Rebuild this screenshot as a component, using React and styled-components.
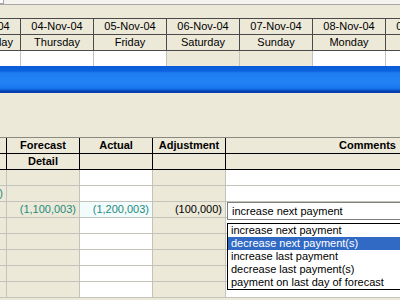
import styled, { createGlobalStyle } from "styled-components";

const GlobalStyle = createGlobalStyle`
  html, body {
    margin: 0;
    padding: 0;
    background: #ece9d8;
    overflow: hidden;
    font-family: "Liberation Sans", Arial, sans-serif;
  }
`;

const Page = styled.div`
  width: 400px;
  height: 300px;
  overflow: hidden;
  background: #ece9d8;
`;

const TopStrip = styled.div`
  height: 4px;
  background: #f4f3ee;
  border-bottom: 1px solid #a7a6aa;
  display: flex;
`;

const StripBox = styled.div`
  width: 3px;
  height: 3px;
  border-right: 1px solid #a7a6aa;
  border-bottom: 1px solid #a7a6aa;
  background: #fff;
`;

const TopGap = styled.div`
  height: 13px;
`;

const DayGrid = styled.div`
  display: grid;
  grid-template-columns: repeat(7, 73px);
  margin-left: -52px;
  border-top: 1px solid #4a4a4a;
`;

const HeadCell = styled.div`
  height: 15px;
  line-height: 15px;
  box-sizing: content-box;
  border-right: 1px solid #4a4a4a;
  border-bottom: 1px solid #4a4a4a;
  background: #ece9d8;
  text-align: center;
  font-size: 11px;
  color: #000;
  white-space: nowrap;
  overflow: hidden;
  width: 72px;
`;

const BlankCell = styled.div`
  height: 15px;
  width: 72px;
  border-right: 1px solid #c4c3bb;
  background: ${(p) => (p.$weekend ? "#ece9d8" : "#ffffff")};
`;

const BlueBand = styled.div`
  height: 27px;
  background: linear-gradient(
    to bottom,
    #0a5bd8 0px,
    #0c62dd 5px,
    #1f7cf2 7px,
    #2383f6 16px,
    #1a76ee 22px,
    #0c5fd6 24px,
    #0a3fae 25px,
    #0a3fae 27px
  );
`;

const MidGap = styled.div`
  height: 44px;
`;

const DetailGrid = styled.div`
  display: grid;
  grid-template-columns: 73px 73px 73px 73px 284px;
  margin-left: -66px;
  border-top: 1px solid #8a8a80;
`;

const ColHead = styled.div`
  height: 15px;
  line-height: 15px;
  border-right: 1px solid #000;
  border-bottom: 1px solid #000;
  background: #ece9d8;
  text-align: center;
  font-size: 11px;
  font-weight: bold;
  color: #000;
  white-space: nowrap;
  overflow: hidden;
`;

const DataCell = styled.div`
  position: relative;
  height: 15px;
  line-height: 15px;
  border-right: 1px solid #c4c3bb;
  border-bottom: 1px solid #c4c3bb;
  background: ${(p) => p.$bg};
  text-align: right;
  padding-right: 3px;
  font-size: 11px;
  color: ${(p) => (p.$money ? "#1e8a7c" : "#000")};
  white-space: nowrap;
`;

const Combo = styled.div`
  position: absolute;
  left: 1px;
  top: 0;
  width: 200px;
  height: 16px;
  line-height: 16px;
  border: 1px solid #7f7f7f;
  border-right: none;
  background: #fff;
  text-align: left;
  padding-left: 4px;
  font-size: 11px;
  color: #000;
  z-index: 2;
`;

const DropList = styled.div`
  position: absolute;
  left: 1px;
  top: 21px;
  width: 200px;
  border: 1px solid #000;
  border-right: none;
  background: #fff;
  z-index: 3;
  text-align: left;
`;

const DropItem = styled.div`
  height: 13px;
  line-height: 13px;
  padding-left: 3px;
  font-size: 11px;
  background: ${(p) => (p.$active ? "#316ac5" : "#fff")};
  color: ${(p) => (p.$active ? "#fff" : "#000")};
`;

const days = [
  { date: "03-Nov-04", name: "Wednesday" },
  { date: "04-Nov-04", name: "Thursday" },
  { date: "05-Nov-04", name: "Friday" },
  { date: "06-Nov-04", name: "Saturday", weekend: true },
  { date: "07-Nov-04", name: "Sunday", weekend: true },
  { date: "08-Nov-04", name: "Monday" },
  { date: "09-Nov-04", name: "Tuesday" },
];

const colBg = ["#ece9d8", "#ece9d8", "#ffffff", "#ece9d8", "#ffffff"];

const options = [
  "increase next payment",
  "decrease next payment(s)",
  "increase last payment",
  "decrease last payment(s)",
  "payment on last day of forecast",
];

const rows = [
  ["", "", "", "", ""],
  ["(1,000,000)", "", "", "", ""],
  ["", "(1,100,003)", "(1,200,003)", "(100,000)", "combo"],
  ["", "", "", "", ""],
  ["", "", "", "", ""],
  ["", "", "", "", ""],
  ["", "", "", "", ""],
  ["", "", "", "", ""],
];

export default function App() {
  return (
    <>
      <GlobalStyle />
      <Page>
        <TopStrip>
          <StripBox />
        </TopStrip>
        <TopGap />
        <DayGrid>
          {days.map((d) => (
            <HeadCell key={d.date}>{d.date}</HeadCell>
          ))}
          {days.map((d) => (
            <HeadCell key={d.name}>{d.name}</HeadCell>
          ))}
          {days.map((d) => (
            <BlankCell key={"b" + d.date} $weekend={d.weekend} />
          ))}
        </DayGrid>
        <BlueBand />
        <MidGap />
        <DetailGrid>
          <ColHead>Balance</ColHead>
          <ColHead>Forecast</ColHead>
          <ColHead>Actual</ColHead>
          <ColHead>Adjustment</ColHead>
          <ColHead>Comments</ColHead>
          <ColHead></ColHead>
          <ColHead>Detail</ColHead>
          <ColHead></ColHead>
          <ColHead></ColHead>
          <ColHead></ColHead>
          {rows.map((row, r) =>
            row.map((val, c) => {
              if (val === "combo") {
                return (
                  <DataCell key={r + "-" + c} $bg={colBg[c]}>
                    <Combo>increase next payment</Combo>
                    <DropList>
                      {options.map((o, i) => (
                        <DropItem key={o} $active={i === 1}>
                          {o}
                        </DropItem>
                      ))}
                    </DropList>
                  </DataCell>
                );
              }
              const tinted = r === 2 && c === 2;
              return (
                <DataCell
                  key={r + "-" + c}
                  $bg={tinted ? "#f3fcfc" : colBg[c]}
                  $money={c < 3}
                >
                  {val}
                </DataCell>
              );
            })
          )}
        </DetailGrid>
      </Page>
    </>
  );
}
